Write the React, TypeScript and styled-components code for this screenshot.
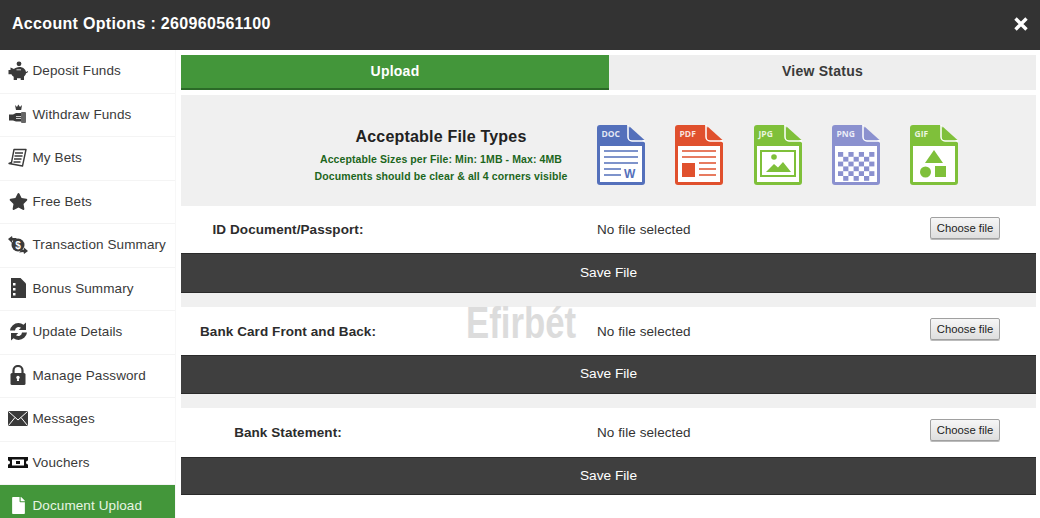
import React from "react";
import styled, { createGlobalStyle } from "styled-components";
import { FaStar, FaFile } from "react-icons/fa";

const Global = createGlobalStyle`
  html, body { margin: 0; padding: 0; height: 518px; overflow: hidden; background: #fff; }
  body { font-family: "Liberation Sans", Arial, sans-serif; }
`;

const Page = styled.div`
  position: relative;
  width: 1040px;
  height: 518px;
  overflow: hidden;
  background: #fff;
`;
const Header = styled.header`
  height: 50px;
  background: #333;
  color: #fff;
  display: flex;
  align-items: center;
  justify-content: space-between;
  padding: 0 12px;
  box-sizing: border-box;
`;
const Title = styled.h1`
  margin: 0 0 2px;
  font-size: 16px;
  font-weight: 700;
  letter-spacing: 0.32px;
`;
const Close = styled.span`
  display: flex;
  width: 14px;
  height: 14px;
  margin-bottom: 2px;
`;
const Body = styled.div`
  display: flex;
  height: 468px;
`;
const Side = styled.nav`
  width: 175px;
  flex: none;
`;
const Item = styled.div<{ $active?: boolean }>`
  height: 43.5px;
  box-sizing: border-box;
  display: flex;
  align-items: center;
  gap: 4.5px;
  padding-left: 8px;
  padding-bottom: 1px;
  font-size: 13.5px;
  letter-spacing: 0.1px;
  color: ${(p) => (p.$active ? "#e8f5e4" : "#3a3a3a")};
  background: ${(p) => (p.$active ? "#43963a" : "#fff")};
  border-bottom: 1px solid #f4f4f4;
  white-space: nowrap;
`;
const IconBox = styled.span<{ $active?: boolean }>`
  width: 20px;
  height: 20px;
  flex: none;
  display: flex;
  align-items: center;
  justify-content: center;
  color: ${(p) => (p.$active ? "#fff" : "#3a3a3a")};
`;
const Main = styled.main`
  flex: 1;
  min-width: 0;
  padding: 5px 4px 0 5px;
  border-left: 1px solid #f7f7f7;
  box-sizing: border-box;
`;
const Tabs = styled.div`
  display: grid;
  grid-template-columns: 428px 1fr;
  height: 35px;
`;
const Tab = styled.div<{ $active?: boolean }>`
  display: flex;
  align-items: center;
  justify-content: center;
  font-size: 14px;
  font-weight: 700;
  letter-spacing: 0.25px;
  padding-bottom: 2px;
  box-sizing: border-box;
  color: ${(p) => (p.$active ? "#fff" : "#3a3a3a")};
  background: ${(p) => (p.$active ? "#43963a" : "#eeeeee")};
  border-bottom: 2px solid ${(p) => (p.$active ? "#2b6a27" : "#eeeeee")};
`;
const Types = styled.section`
  margin-top: 5px;
  height: 111px;
  background: #f0f0f0;
  display: flex;
  align-items: center;
`;
const TypesText = styled.div`
  width: 300px;
  margin-left: 110px;
  margin-top: 11px;
  flex: none;
  text-align: center;
`;
const TypesTitle = styled.h2`
  margin: 0 0 5px;
  font-size: 16px;
  font-weight: 700;
  letter-spacing: 0.2px;
  color: #222;
`;
const TypesNote = styled.p`
  margin: 0;
  font-size: 10.5px;
  line-height: 17px;
  font-weight: 700;
  letter-spacing: 0.1px;
  color: #1c661c;
`;
const Icons = styled.div`
  display: flex;
  gap: 30.25px;
  margin-left: 6px;
  margin-top: 8px;
`;
const Sheet = styled.svg`
  width: 48px;
  height: 60px;
  flex: none;
  display: block;
`;
const SheetLabel = styled.text`
  font-family: "Open Sans", "Liberation Sans", sans-serif;
  font-size: 8.5px;
  font-weight: 700;
  fill: #fff;
  fill-opacity: 0.85;
`;
const Upload = styled.section<{ $h: number; $gap: number }>`
  display: grid;
  grid-template-rows: ${(p) => p.$h}px auto;
  margin-bottom: ${(p) => p.$gap}px;
`;
const GapFill = styled.div`
  background: #f0f0f0;
`;
const Row = styled.div`
  display: grid;
  grid-template-columns: 214px 1fr auto;
  align-items: center;
  padding-right: 36px;
  background: #fff;
  font-size: 13.5px;
  letter-spacing: 0.08px;
`;
const Label = styled.label`
  text-align: center;
  font-weight: 700;
  color: #2c2c2c;
`;
const FileName = styled.span`
  padding-left: 202px;
  color: #333;
`;
const Choose = styled.div`
  width: 70px;
  height: 22px;
  box-sizing: border-box;
  align-self: start;
  margin-top: 11px;
  display: flex;
  align-items: center;
  justify-content: center;
  font-size: 11.3px;
  letter-spacing: 0;
  color: #222;
  border: 1px solid #a0a0a0;
  border-radius: 2px;
  background: linear-gradient(#f6f6f6, #dedede);
  box-shadow: 0 1px 0 #bbb;
`;
const Save = styled.div<{ $h: number }>`
  height: ${(p) => p.$h}px;
  box-sizing: border-box;
  background: #3f3f3f;
  border-top: 1px solid #2a2a2a;
  border-bottom: 1px solid #2a2a2a;
  color: #fff;
  font-size: 13.7px;
  padding-bottom: 2px;
  display: flex;
  align-items: center;
  justify-content: center;
`;
const Watermark = styled.div`
  position: absolute;
  left: 465px;
  top: 298px;
  width: 112px;
  font-size: 44px;
  line-height: 50px;
  font-weight: 700;
  color: #dcdcdc;
  transform: scaleX(0.79);
  transform-origin: center;
  white-space: nowrap;
  display: flex;
  justify-content: center;
`;

const c = "currentColor";
const Piggy = () => (
  <svg width="20" height="20" viewBox="0 0 20 20">
    <circle cx="11" cy="2.800" r="2.400" fill={c} />
    <path fill={c} d="M2.500 6.500l3.500 1.500C7 7.200 9 6 11.500 6c3.500 0 6 2.200 6.500 5 .5 0 1-.4 1.400-.9l.6.5c-.3 1-1.100 1.700-2 1.700-.2 1.300-1 2.400-2 3.100V19h-3.300v-1.800H9V19H5.700v-3.200c-1-.6-1.800-1.500-2.300-2.600H.5V9h2z" />
    <path stroke="#fff" strokeWidth=".8" d="M8.500 8.800h4.500" />
  </svg>
);
const Withdraw = () => (
  <svg width="20" height="20" viewBox="0 0 20 20">
    <path fill={c} d="M1 10.500h4l3-1.500h6v8.500H8l-3-1H1z" />
    <path fill="#fff" d="M8 12h5v.8H8zM8 14h5v.8H8z" />
    <path fill={c} d="M7 1l2 2 1.300-2.500L12 3l2-2-.8 5H8z" />
    <rect x="13" y="8" width="5" height="11" rx="1" fill="#666" />
  </svg>
);
const Bets = () => (
  <svg width="20" height="20" viewBox="0 0 20 20">
    <path fill="none" stroke={c} strokeWidth="1.400" d="M6 1.500h12L14.500 18 1 15.500l2.500-1z" strokeLinejoin="round" />
    <path stroke={c} strokeWidth="1.300" d="M7 5h8M6.500 8h8M6 11h7.500M5.500 14h7" />
  </svg>
);
const Transaction = () => (
  <svg width="20" height="20" viewBox="0 0 20 20">
    <circle cx="10" cy="10" r="6.500" fill={c} />
    <text x="10" y="13.500" textAnchor="middle" fontSize="10" fontWeight="700" fill="#fff" fontFamily="Liberation Sans">$</text>
    <path fill={c} d="M0 4l4-3 .5 2L9 3 6 6 4 5.500 4 8zM20 16l-4 3-.5-2-4.500.5 3-3 1.500.5.500-2.500z" />
  </svg>
);
const Bonus = () => (
  <svg width="15" height="20" viewBox="0 0 15 20">
    <path fill={c} d="M0 0h9.500L15 5.500V20H0z" />
    <path fill="#fff" d="M2 5h2.500v2.500H2zM2 10h2.500v2.500H2zM2 15h2.500v2.500H2z" />
  </svg>
);
const Update = () => (
  <svg width="19" height="19" viewBox="0 0 19 19">
    <path fill={c} d="M9.500 1a8.500 8.500 0 0 1 5 1.700L17 .5V8h-7.300l2.300-2.300A3.800 3.800 0 0 0 6 8.500H1a8.500 8.500 0 0 1 8.500-7.500z" />
    <path fill={c} d="M9.500 18a8.500 8.500 0 0 1-5-1.700L2 18.500V11h7.300L7 13.300a3.800 3.800 0 0 0 6-2.800h5a8.500 8.500 0 0 1-8.500 7.500z" />
  </svg>
);
const Lock = () => (
  <svg width="16" height="20" viewBox="0 0 16 20">
    <path fill="none" stroke={c} strokeWidth="2.200" d="M3.500 9V5.500a4.500 4.500 0 0 1 9 0V9" />
    <rect x="0.500" y="8" width="15" height="12" rx="1.500" fill={c} />
    <circle cx="8" cy="12.500" r="1.700" fill="#fff" />
    <path fill="#fff" d="M7.300 13h1.400l.4 3H6.900z" />
  </svg>
);
const Mail = () => (
  <svg width="20" height="15" viewBox="0 0 20 15">
    <rect width="20" height="15" fill={c} />
    <path fill="none" stroke="#fff" strokeWidth="1" d="M.5.500 10 9 19.500.500M.5 14.500 7 6.500M19.500 14.500 13 6.500" />
  </svg>
);
const Voucher = () => (
  <svg width="20" height="11" viewBox="0 0 20 11">
    <path fill="#111" d="M0 0h20v3.500a2 2 0 0 0 0 4V11H0V7.500a2 2 0 0 0 0-4z" />
    <rect x="4" y="2.500" width="12" height="6" fill="#fff" />
    <rect x="8" y="4" width="4" height="3" fill="#111" />
  </svg>
);

const menu: { label: string; icon: React.ReactNode; active?: boolean }[] = [
  { label: "Deposit Funds", icon: <Piggy /> },
  { label: "Withdraw Funds", icon: <Withdraw /> },
  { label: "My Bets", icon: <Bets /> },
  { label: "Free Bets", icon: <FaStar size={19} /> },
  { label: "Transaction Summary", icon: <Transaction /> },
  { label: "Bonus Summary", icon: <Bonus /> },
  { label: "Update Details", icon: <Update /> },
  { label: "Manage Password", icon: <Lock /> },
  { label: "Messages", icon: <Mail /> },
  { label: "Vouchers", icon: <Voucher /> },
  { label: "Document Upload", icon: <FaFile size={17} />, active: true },
];

const FileType = ({ label, color, children }: { label: string; color: string; children: React.ReactNode }) => (
  <Sheet viewBox="0 0 48 60">
    <path fill={color} d="M3 0H30L48 18V57a3 3 0 0 1-3 3H3a3 3 0 0 1-3-3V3a3 3 0 0 1 3-3z" />
    <path fill="none" stroke="#fff" strokeWidth="1.500" d="M31 0V12a4 4 0 0 0 4 4H48" />
    <path fill={color} d="M32.500 1.500 47.500 15H35a2.500 2.500 0 0 1-2.500-2.500z" />
    <SheetLabel x="4.500" y="12">{label}</SheetLabel>
    <rect x="3" y="21" width="42" height="36" fill="#fff" />
    {children}
  </Sheet>
);

const checks: [number, number][] = [];
for (let r = 0; r < 6; r++) for (let k = 0; k < 7; k++) if ((r + k) % 2 === 0) checks.push([6 + k * 5.200, 27 + r * 4.800]);

const types = [
  { label: "DOC", color: "#5470bb", art: (
    <g stroke="#5470bb" strokeWidth="1.500">
      <path d="M7 26H41M7 32H41M7 38H41M7 44H24M7 50H24" />
      <text x="27" y="53" fontSize="12" fontWeight="700" fill="#5470bb" stroke="none" fontFamily="Liberation Sans">W</text>
    </g>
  ) },
  { label: "PDF", color: "#e0502d", art: (
    <g stroke="#e0502d" strokeWidth="1.500">
      <path d="M7 26H41M7 32H41M24 38H41M24 44H41M24 50H41" />
      <rect x="7" y="38" width="13" height="14" fill="#e0502d" stroke="none" />
    </g>
  ) },
  { label: "JPG", color: "#7fc03a", art: (
    <g>
      <rect x="7" y="26" width="34" height="25" fill="none" stroke="#7fc03a" strokeWidth="2" />
      <circle cx="20" cy="32" r="2.800" fill="#7fc03a" />
      <path fill="#7fc03a" d="M12 47l8-8 4 3.500 5-5.500 8 10z" />
    </g>
  ) },
  { label: "PNG", color: "#8b91cf", art: (
    <g fill="#8b91cf">
      {checks.map(([x, y]) => <rect key={`${x}-${y}`} x={x} y={y} width="5.200" height="4.800" />)}
    </g>
  ) },
  { label: "GIF", color: "#7fc03a", art: (
    <g fill="#7fc03a">
      <path d="M24 25l9 13H15z" />
      <circle cx="15.500" cy="47" r="5.500" />
      <rect x="25" y="41" width="11" height="11" />
    </g>
  ) },
];

const uploads = [
  { label: "ID Document/Passport:", h: 47, save: 40, gap: 14 },
  { label: "Bank Card Front and Back:", h: 48, save: 39, gap: 14 },
  { label: "Bank Statement:", h: 49, save: 38, gap: 15 },
];

export default function App() {
  return (
    <Page>
      <Global />
      <Header>
        <Title>Account Options : 260960561100</Title>
        <Close>
          <svg width="14" height="14" viewBox="0 0 14 14">
            <path stroke="#fff" strokeWidth="3.400" d="M1.500 1.500l11 11M12.500 1.500l-11 11" />
          </svg>
        </Close>
      </Header>
      <Body>
        <Side>
          {menu.map((m) => (
            <Item key={m.label} $active={m.active}>
              <IconBox $active={m.active}>{m.icon}</IconBox>
              {m.label}
            </Item>
          ))}
        </Side>
        <Main>
          <Tabs>
            <Tab $active>Upload</Tab>
            <Tab>View Status</Tab>
          </Tabs>
          <Types>
            <TypesText>
              <TypesTitle>Acceptable File Types</TypesTitle>
              <TypesNote>Acceptable Sizes per File: Min: 1MB - Max: 4MB</TypesNote>
              <TypesNote>Documents should be clear &amp; all 4 corners visible</TypesNote>
            </TypesText>
            <Icons>
              {types.map((t) => (
                <FileType key={t.label} label={t.label} color={t.color}>{t.art}</FileType>
              ))}
            </Icons>
          </Types>
          <GapFill>
            {uploads.map((u) => (
              <Upload key={u.label} $h={u.h} $gap={u.gap}>
                <Row>
                  <Label>{u.label}</Label>
                  <FileName>No file selected</FileName>
                  <Choose>Choose file</Choose>
                </Row>
                <Save $h={u.save}>Save File</Save>
              </Upload>
            ))}
          </GapFill>
        </Main>
      </Body>
      <Watermark>Efirbét</Watermark>
    </Page>
  );
}
